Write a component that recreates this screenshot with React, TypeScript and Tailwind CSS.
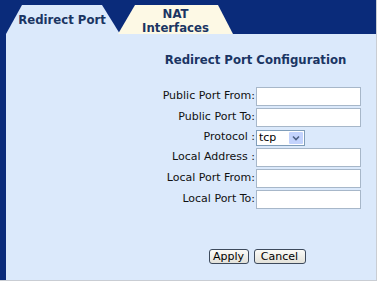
export default function App() {
  const font = { fontFamily: '"DejaVu Sans Condensed", "DejaVu Sans", Verdana, sans-serif' }
  const plain = { fontFamily: '"DejaVu Sans", Verdana, sans-serif' }

  const rows: { label: string; kind: "input" | "select" }[] = [
    { label: "Public Port From:", kind: "input" },
    { label: "Public Port To:", kind: "input" },
    { label: "Protocol :", kind: "select" },
    { label: "Local Address :", kind: "input" },
    { label: "Local Port From:", kind: "input" },
    { label: "Local Port To:", kind: "input" },
  ]

  return (
    <div
      className="w-[377px] h-[281px] flex flex-col bg-[#dbe9fb] border-r border-b border-[#c9cdd3] overflow-hidden"
      style={font}
    >
      {/* Tab bar */}
      <div className="h-[34px] shrink-0 bg-[#0a2b7a] flex items-end pl-[6px]">
        <div className="w-[114px] h-[29px] bg-[#dbe9fb] [clip-path:polygon(0_100%,16px_0,96px_0,100%_100%)] flex items-center justify-center pr-[2px]">
          <span className="text-[13px] font-bold text-[#1a3563] leading-none">Redirect Port</span>
        </div>
        <div className="-ml-[2px] w-[115px] h-[29px] bg-[#fdf9e5] [clip-path:polygon(0_100%,17px_0,100px_0,100%_100%)] flex flex-col items-center justify-center pt-[1px]">
          <span className="text-[13px] font-bold text-[#1a3563] leading-[14px]">NAT</span>
          <span className="text-[13px] font-bold text-[#1a3563] leading-[13px]">Interfaces</span>
        </div>
      </div>

      {/* Content */}
      <div className="flex-1 border-l-[6px] border-[#0a2b7a]">
        <div className="ml-[144px] w-[211px] pt-[18px]">
          <h2 className="text-center text-[13px] font-bold text-[#1a3563] leading-[16px]">
            Redirect Port Configuration
          </h2>

          <div className="mt-[18px] flex flex-col" style={plain}>
            {rows.map((r) => (
              <div key={r.label} className={`flex items-center ${r.kind === "select" ? "h-[19px]" : "h-[21px]"}`}>
                <div className="w-[106px] text-right text-[11px] text-[#111] pr-[1px] whitespace-nowrap">{r.label}</div>
                {r.kind === "input" ? (
                  <div className="w-[105px] h-[19px] bg-white border border-[#a7b7c9]" />
                ) : (
                  <div className="w-[49px] h-[16px] bg-white border border-[#7f9db9] flex items-center justify-between pl-[2px] pr-[1px]">
                    <span className="text-[11px] text-black leading-none">tcp</span>
                    <div className="w-[14px] h-[12px] bg-[#c3d3fd] rounded-[1px] flex items-center justify-center">
                      <svg width="8" height="6" viewBox="0 0 8 6">
                        <path d="M1 1.5 L4 4.5 L7 1.5" fill="none" stroke="#4d6185" strokeWidth="1.6" />
                      </svg>
                    </div>
                  </div>
                )}
              </div>
            ))}
          </div>

          <div className="mt-[39px] flex justify-center gap-[5px] pl-[3px]" style={plain}>
            <button className="w-[40px] h-[15px] rounded-[3px] border border-[#3d4a5c] bg-gradient-to-b from-[#fbfbf8] to-[#e3e2da] text-[11px] leading-none text-black">
              Apply
            </button>
            <button className="w-[52px] h-[15px] rounded-[3px] border border-[#3d4a5c] bg-gradient-to-b from-[#fbfbf8] to-[#e3e2da] text-[11px] leading-none text-black">
              Cancel
            </button>
          </div>
        </div>
      </div>
    </div>
  )
}
